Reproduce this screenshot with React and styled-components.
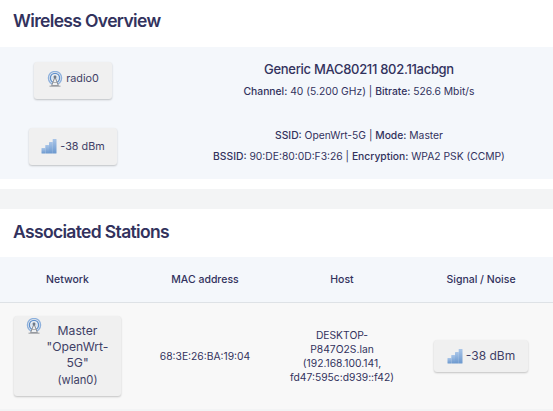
import styled, { createGlobalStyle } from "styled-components";

const GlobalStyle = createGlobalStyle`
    html, body {
        margin: 0;
        padding: 0;
        background-color: #f3f4f5;
        overflow: hidden;
    }
    body {
        font-family: Inter, "Noto Sans", sans-serif;
        color: #32325d;
        font-size: 10.3px;
    }
`

const Section = styled.section`
    background-color: #fff;
    padding-bottom: ${(props) => props.$pad || 0}px;
`

const Title = styled.h3`
    margin: 0;
    height: ${(props) => props.$height}px;
    padding: ${(props) => props.$top}px 0 0 13px;
    box-sizing: border-box;
    font-size: 17.5px;
    line-height: 24px;
    font-weight: 600;
    letter-spacing: -0.65px;
    color: #32325d;
`

const Overview = styled.div`
    background-color: #f4f7fb;
    height: 132px;
`

const OverviewRow = styled.div`
    display: grid;
    grid-template-columns: 146px 1fr;
    align-items: center;
    height: 66px;
`

const Center = styled.div`
    display: flex;
    justify-content: center;
`

const Badge = styled.div`
    display: inline-flex;
    align-items: center;
    justify-content: center;
    gap: 3px;
    box-sizing: border-box;
    width: ${(props) => props.$width}px;
    height: ${(props) => props.$height}px;
    padding-bottom: ${(props) => props.$lift || 0}px;
    background-color: #f0f0f0;
    border-radius: 3px;
    box-shadow: 0 1px 2px rgba(0, 0, 0, 0.22);
    font-size: ${(props) => props.$size || 10.8}px;
    color: #3f3f66;
`

const Info = styled.div`
    padding-left: 19px;
    text-align: center;
    font-size: 10.3px;
    line-height: 21px;
    b {
        font-weight: 500;
    }
`

const DeviceName = styled.div`
    font-size: 13px;
    font-weight: 500;
    line-height: 23px;
    letter-spacing: -0.3px;
`

const GrayBand = styled.div`
    height: 20px;
    background-color: #f3f4f5;
`

const Stations = styled.div`
    display: grid;
    grid-template-columns: 135px 140px 134px 144px;
`

const HeadCell = styled.div`
    display: flex;
    align-items: center;
    justify-content: center;
    height: 45px;
    background-color: #f4f7fb;
    border-bottom: 1px solid #dee2e6;
    font-size: 10.5px;
    font-weight: 500;
`

const BodyCell = styled.div`
    display: flex;
    align-items: center;
    justify-content: center;
    height: 106px;
    background-color: #f8f8f8;
    font-size: 10.3px;
    line-height: 14px;
    text-align: center;
`

const NetworkBadge = styled.div`
    position: relative;
    box-sizing: border-box;
    width: 107px;
    height: 80px;
    padding: 7px 3px 0 23px;
    background-color: #f0f0f0;
    border-radius: 3px;
    box-shadow: 0 1px 2px rgba(0, 0, 0, 0.22);
    font-size: 12.2px;
    line-height: 16.2px;
    text-align: center;
    color: #3f3f66;
    small {
        font-size: 11.2px;
    }
    svg {
        position: absolute;
        left: 12px;
        top: 2px;
    }
`

const RadioIcon = () => (
    <svg width="16" height="16" viewBox="0 0 16 16" fill="none">
        <circle cx="8" cy="7" r="6.6" stroke="#8db0dc" strokeWidth="1.3" />
        <circle cx="8" cy="7" r="4.6" stroke="#5f90cc" strokeWidth="1.4" />
        <circle cx="8" cy="7" r="2.8" fill="#cfdff1" />
        <path d="M8 6 L4.6 14.6 H11.4 Z" fill="#eef0f2" stroke="#8a8d92" strokeWidth="1" />
        <path d="M2.5 15.2 H13.5" stroke="#a2a4a8" strokeWidth="1.1" />
        <path d="M6 11.5 H10" stroke="#a8a8a8" strokeWidth="0.9" />
        <circle cx="8" cy="6" r="1.4" fill="#727982" />
    </svg>
)

const SignalIcon = () => (
    <svg width="16" height="16" viewBox="0 0 16 16">
        <defs>
            <linearGradient id="signalBar" x1="0" y1="0" x2="0" y2="1">
                <stop offset="0" stopColor="#a9c5e8" />
                <stop offset="1" stopColor="#6b98ce" />
            </linearGradient>
        </defs>
        <rect x="0.5" y="10" width="3.8" height="5.5" rx="0.5" fill="url(#signalBar)" />
        <rect x="4.3" y="7" width="3.8" height="8.5" rx="0.5" fill="url(#signalBar)" />
        <rect x="8" y="4" width="3.8" height="11.5" rx="0.5" fill="url(#signalBar)" />
        <rect x="11.7" y="1" width="3.8" height="14.5" rx="0.5" fill="url(#signalBar)" />
    </svg>
)

const App = () => {
    return (
        <>
            <GlobalStyle />
            <Section $pad={10}>
                <Title $height={47} $top={9}>Wireless Overview</Title>
                <Overview>
                    <OverviewRow>
                        <Center>
                            <Badge $width={78} $height={37} $lift={3}>
                                <RadioIcon />
                                radio0
                            </Badge>
                        </Center>
                        <Info>
                            <DeviceName>Generic MAC80211 802.11acbgn</DeviceName>
                            <b>Channel:</b> 40 (5.200 GHz) | <b>Bitrate:</b> 526.6 Mbit/s
                        </Info>
                    </OverviewRow>
                    <OverviewRow>
                        <Center>
                            <Badge $width={88} $height={37}>
                                <SignalIcon />
                                -38 dBm
                            </Badge>
                        </Center>
                        <Info>
                            <b>SSID:</b> OpenWrt-5G | <b>Mode:</b> Master
                            <br />
                            <b>BSSID:</b> 90:DE:80:0D:F3:26 | <b>Encryption:</b> WPA2 PSK (CCMP)
                        </Info>
                    </OverviewRow>
                </Overview>
            </Section>
            <GrayBand />
            <Section>
                <Title $height={48} $top={11}>Associated Stations</Title>
                <Stations>
                    <HeadCell>Network</HeadCell>
                    <HeadCell>MAC address</HeadCell>
                    <HeadCell>Host</HeadCell>
                    <HeadCell>Signal / Noise</HeadCell>
                    <BodyCell>
                        <NetworkBadge>
                            <RadioIcon />
                            Master
                            <br />
                            "OpenWrt-
                            <br />
                            5G"
                            <br />
                            <small>(wlan0)</small>
                        </NetworkBadge>
                    </BodyCell>
                    <BodyCell>68:3E:26:BA:19:04</BodyCell>
                    <BodyCell>
                        <div>
                            DESKTOP-
                            <br />
                            P847O2S.lan
                            <br />
                            (192.168.100.141,
                            <br />
                            fd47:595c:d939::f42)
                        </div>
                    </BodyCell>
                    <BodyCell>
                        <Badge $width={94} $height={32} $size={12}>
                            <SignalIcon />
                            -38 dBm
                        </Badge>
                    </BodyCell>
                </Stations>
            </Section>
        </>
    );
};

export default App;
